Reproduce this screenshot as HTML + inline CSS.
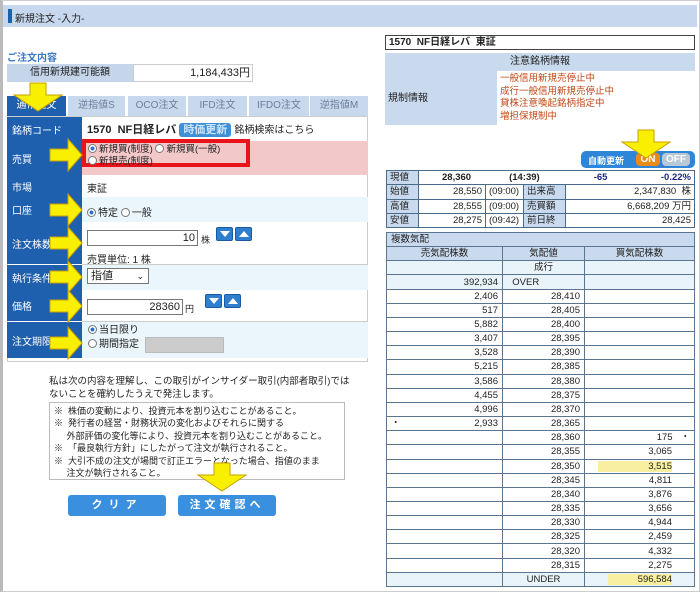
<!DOCTYPE html>
<html><head><meta charset="utf-8"><style>
*{margin:0;padding:0;box-sizing:border-box}
body{width:700px;height:592px;background:#fff;font-family:"Liberation Sans","Noto Sans CJK JP",sans-serif;font-size:10px;color:#222;position:relative;overflow:hidden}
.a{position:absolute}
.lab{position:absolute;left:7px;width:75px;background:#1e5fae;color:#fff;padding-left:5px;display:flex;align-items:center}
.row{position:absolute;left:82px;width:286px}
.tab{position:absolute;top:96px;height:20px;background:#c8d9ee;color:#6a7f99;text-align:center;line-height:20px;font-size:10px}
.btn{position:absolute;width:17px;height:14px;background:#2f7fd0;border:1px solid #1c5aa0;border-radius:2px}
.rad{display:inline-block;width:9px;height:9px;border:1px solid #777;border-radius:50%;vertical-align:-1px;margin-right:2px;background:#fff}
.rad.on{background:radial-gradient(#2a6fd0 35%,#fff 45%)}
table{border-collapse:collapse;table-layout:fixed}
.pt td{border:1px solid #4a6a8a;height:14.25px;line-height:11px;font-size:9.5px;padding:0 3px;white-space:nowrap;overflow:hidden}
.ob td{border:1px solid #5a7590;height:14.16px;line-height:11px;font-size:9.5px;padding:0 4px;text-align:right;overflow:hidden;white-space:nowrap}
</style></head><body>
<div class="a" style="left:0;top:0;width:700px;height:592px;border:1px solid #ccc;border-left:3px solid #bbb"></div>
<div class="a" style="left:3px;top:5px;width:694px;height:22px;background:#c7d7ee"></div>
<div class="a" style="left:8px;top:9px;width:4px;height:14px;background:#1f5fb0"></div>
<div class="a" style="left:15px;top:10px;font-size:10px">新規注文 -入力-</div>

<div class="a" style="left:7px;top:49px;color:#3a78c2;font-weight:bold;font-size:10px">ご注文内容</div>
<div class="a" style="left:7px;top:64px;width:126px;height:18px;background:#c5d5ea;text-align:center;line-height:18px">信用新規建可能額</div>
<div class="a" style="left:133px;top:64px;width:120px;height:18px;border:1px solid #ccc;text-align:right;line-height:16px;padding-right:2px;font-size:11px">1,184,433円</div>

<div class="tab" style="left:7px;width:59px;background:#1e5fae;color:#fff">通常注文</div>
<div class="tab" style="left:68px;width:57px">逆指値S</div>
<div class="tab" style="left:128px;width:58px">OCO注文</div>
<div class="tab" style="left:188px;width:59px">IFD注文</div>
<div class="tab" style="left:249px;width:60px">IFDO注文</div>
<div class="tab" style="left:310px;width:58px">逆指値M</div>

<div class="a" style="left:7px;top:116px;width:361px;height:246px;border:1px solid #ccc"></div>
<div class="lab" style="top:117px;height:24px">銘柄コード</div>
<div class="row" style="top:117px;height:24px;padding:4px 5px;font-size:11px;font-weight:bold">1570 &nbsp;NF日経レバ <span style="background:#3d8fd6;color:#cfe4f8;padding:1px 4px;border-radius:3px">時価更新</span> <span style="font-weight:normal;font-size:10px">銘柄検索はこちら</span></div>
<div class="lab" style="top:141px;height:34px">売買</div>
<div class="row" style="top:141px;height:34px;background:#f3c8c9"></div>
<div class="a" style="left:82px;top:139px;width:168px;height:28px;border:4px solid #e8141a"></div>
<div class="a" style="left:88px;top:144px;font-size:9.5px;line-height:12px"><span class="rad on"></span>新規買(制度) <span class="rad"></span>新規買(一般)<br><span class="rad"></span>新規売(制度)</div>
<div class="lab" style="top:175px;height:22px">市場</div>
<div class="row" style="top:175px;height:22px;padding:5px 5px">東証</div>
<div class="lab" style="top:197px;height:25px">口座</div>
<div class="row" style="top:197px;height:25px;background:#eaf6fc;padding:7px 5px"><span class="rad on"></span>特定 <span class="rad"></span>一般</div>
<div class="lab" style="top:222px;height:42px">注文株数</div>
<div class="a" style="left:87px;top:230px;width:111px;height:16px;border:1px solid #777;text-align:right;font-size:11px;line-height:14px;padding-right:2px">10</div>
<div class="a" style="left:201px;top:233px;font-size:9px">株</div>
<div class="btn" style="left:216px;top:227px"></div><div class="btn" style="left:235px;top:227px"></div>
<div class="a" style="left:87px;top:251px">売買単位: 1 株</div>
<div class="a" style="left:82px;top:264px;width:286px;height:1px;background:#ccc"></div>
<div class="lab" style="top:265px;height:25px">執行条件</div>
<div class="row" style="top:265px;height:25px;background:#eaf6fc"></div>
<div class="a" style="left:87px;top:268px;width:62px;height:16px;border:1px solid #777;background:#fff;padding-left:3px;font-size:11px;line-height:14px">指値 <span style="position:absolute;right:4px;font-size:9px">&#8964;</span></div>
<div class="lab" style="top:290px;height:31px">価格</div>
<div class="a" style="left:87px;top:299px;width:96px;height:16px;border:1px solid #777;text-align:right;font-size:11px;line-height:14px;padding-right:2px">28360</div>
<div class="a" style="left:185px;top:302px;font-size:9px">円</div>
<div class="btn" style="left:205px;top:294px"></div><div class="btn" style="left:224px;top:294px"></div>
<div class="a" style="left:82px;top:321px;width:286px;height:1px;background:#ccc"></div>
<div class="lab" style="top:322px;height:36px">注文期限</div>
<div class="row" style="top:322px;height:36px;background:#eaf6fc"></div>
<div class="a" style="left:88px;top:324px;line-height:14px"><span class="rad on"></span>当日限り<br><span class="rad"></span>期間指定</div>
<div class="a" style="left:145px;top:337px;width:79px;height:16px;background:#ccc;border:1px solid #bbb"></div>

<div class="a" style="left:49px;top:375px;font-size:9.5px;line-height:13px">私は次の内容を理解し、この取引がインサイダー取引(内部者取引)では<br>ないことを確約したうえで発注します。</div>
<div class="a" style="left:49px;top:402px;width:296px;height:78px;border:1px solid #bbb;padding:2px 4px;font-size:9px;line-height:12.4px;white-space:nowrap">※ &nbsp;株価の変動により、投資元本を割り込むことがあること。<br>※ &nbsp;発行者の経営・財務状況の変化およびそれらに関する<br>&nbsp;&nbsp;&nbsp;&nbsp;&nbsp;外部評価の変化等により、投資元本を割り込むことがあること。<br>※ &nbsp;「最良執行方針」にしたがって注文が執行されること。<br>※ &nbsp;大引不成の注文が場間で訂正エラーとなった場合、指値のまま<br>&nbsp;&nbsp;&nbsp;&nbsp;&nbsp;注文が執行されること。</div>
<div class="a" style="left:68px;top:495px;width:98px;height:21px;background:#3a90de;border-radius:3px;color:#fff;font-weight:bold;text-align:center;line-height:21px;letter-spacing:6px;font-size:11px">クリア</div>
<div class="a" style="left:178px;top:495px;width:98px;height:21px;background:#3a90de;border-radius:3px;color:#fff;font-weight:bold;text-align:center;line-height:21px;letter-spacing:4px;font-size:11px">注文確認へ</div>

<!-- right -->
<div class="a" style="left:385px;top:35px;width:310px;height:15px;border:1px solid #444;font-weight:bold;padding-left:3px;line-height:13px">1570 &nbsp;NF日経レバ &nbsp;東証</div>
<div class="a" style="left:385px;top:53px;width:310px;height:18px;background:#c9daee;padding-left:125px;line-height:18px">注意銘柄情報</div>
<div class="a" style="left:385px;top:71px;width:112px;height:54px;background:#c9daee;padding:18px 3px 0">規制情報</div>
<div class="a" style="left:500px;top:73px;color:#c04a1a;line-height:12.5px;font-size:9.5px">一般信用新規売停止中<br>成行一般信用新規売停止中<br>貸株注意喚起銘柄指定中<br>増担保規制中</div>
<div class="a" style="left:581px;top:151px;width:114px;height:17px;background:#2f86d8;border-radius:5px"></div>
<div class="a" style="left:588px;top:154px;color:#fff;font-size:9px;font-weight:bold">自動更新</div>
<div class="a" style="left:636px;top:153px;width:24px;height:13px;background:#e98a1a;border-radius:4px;color:#fff;font-weight:bold;text-align:center;line-height:13px">ON</div>
<div class="a" style="left:662px;top:153px;width:28px;height:13px;background:#b9c8d8;border-radius:4px;color:#fff;font-weight:bold;text-align:center;line-height:13px">OFF</div>

<table class="pt a" style="left:386px;top:170px;width:309px">
<colgroup><col style="width:32px"><col style="width:67px"><col style="width:38px"><col style="width:42px"><col></colgroup>
<tr><td style="background:#c9daee">現値</td><td colspan="4" style="font-weight:bold"><span style="margin-left:20px">28,360</span><span style="margin-left:38px">(14:39)</span><span style="margin-left:54px;color:#1a2a80">-65</span><span style="float:right;color:#1a2a80">-0.22%</span></td></tr>
<tr><td style="background:#c9daee">始値</td><td style="text-align:right">28,550</td><td>(09:00)</td><td style="background:#c9daee">出来高</td><td style="text-align:right">2,347,830 &nbsp;株</td></tr>
<tr><td style="background:#c9daee">高値</td><td style="text-align:right">28,555</td><td>(09:00)</td><td style="background:#c9daee">売買額</td><td style="text-align:right">6,668,209 万円</td></tr>
<tr><td style="background:#c9daee">安値</td><td style="text-align:right">28,275</td><td>(09:42)</td><td style="background:#c9daee">前日終</td><td style="text-align:right">28,425</td></tr>
</table>

<table class="ob a" style="left:386px;top:232px;width:309px">
<colgroup><col style="width:116px"><col style="width:82px"><col></colgroup>
<tr><td colspan="3" style="background:#c9daee;text-align:left">複数気配</td></tr>
<tr style="background:#c9daee"><td style="text-align:center">売気配株数</td><td style="text-align:center">気配値</td><td style="text-align:center">買気配株数</td></tr>
<tr style="background:#e8f3fa"><td></td><td style="text-align:center">成行</td><td></td></tr>
<tr style="background:#e8f3fa"><td>392,934</td><td style="text-align:left">&nbsp;&nbsp;OVER</td><td></td></tr>
<tr><td>2,406</td><td>28,410</td><td></td></tr>
<tr><td>517</td><td>28,405</td><td></td></tr>
<tr><td>5,882</td><td>28,400</td><td></td></tr>
<tr><td>3,407</td><td>28,395</td><td></td></tr>
<tr><td>3,528</td><td>28,390</td><td></td></tr>
<tr><td>5,215</td><td>28,385</td><td></td></tr>
<tr><td>3,586</td><td>28,380</td><td></td></tr>
<tr><td>4,455</td><td>28,375</td><td></td></tr>
<tr><td>4,996</td><td>28,370</td><td></td></tr>
<tr><td><span style="float:left">・</span>2,933</td><td>28,365</td><td></td></tr>
<tr><td></td><td>28,360</td><td>175 &nbsp;&nbsp;・</td></tr>
<tr><td></td><td>28,355</td><td style="padding-right:22px">3,065</td></tr>
<tr><td></td><td>28,350</td><td style="padding-right:22px"><span style="background:#f8f0a0;padding-left:50px">3,515</span></td></tr>
<tr><td></td><td>28,345</td><td style="padding-right:22px">4,811</td></tr>
<tr><td></td><td>28,340</td><td style="padding-right:22px">3,876</td></tr>
<tr><td></td><td>28,335</td><td style="padding-right:22px">3,656</td></tr>
<tr><td></td><td>28,330</td><td style="padding-right:22px">4,944</td></tr>
<tr><td></td><td>28,325</td><td style="padding-right:22px">2,459</td></tr>
<tr><td></td><td>28,320</td><td style="padding-right:22px">4,332</td></tr>
<tr><td></td><td>28,315</td><td style="padding-right:22px">2,275</td></tr>
<tr style="background:#e8f3fa"><td></td><td style="text-align:center">UNDER</td><td style="padding-right:22px"><span style="background:#f8f0a0;padding-left:30px">596,584</span></td></tr>
</table>

<svg class="a" style="left:0;top:0" width="700" height="592">
<defs><g id="r"><polygon points="0,-6 18,-6 18,-16 32,0 18,16 18,6 0,6" fill="#f8f000" stroke="#c8a000" stroke-width="1"/></g>
<g id="d"><polygon points="-8,0 8,0 8,12 24,12 0,28 -24,12 -8,12" fill="#f8f000" stroke="#c8a000" stroke-width="1"/></g></defs>
<g fill="#fff"><polygon points="220,231 230,231 225,237"/><polygon points="239,237 249,237 244,231"/><polygon points="209,298 219,298 214,304"/><polygon points="228,304 238,304 233,298"/></g>
<use href="#d" x="38" y="83"/>
<use href="#r" x="50" y="155"/>
<use href="#r" x="50" y="210"/>
<use href="#r" x="50" y="243"/>
<use href="#r" x="50" y="277"/>
<use href="#r" x="50" y="306"/>
<use href="#r" x="50" y="343"/>
<use href="#d" x="222" y="463"/>
<use href="#d" x="646" y="130"/>
</svg>
</body></html>
